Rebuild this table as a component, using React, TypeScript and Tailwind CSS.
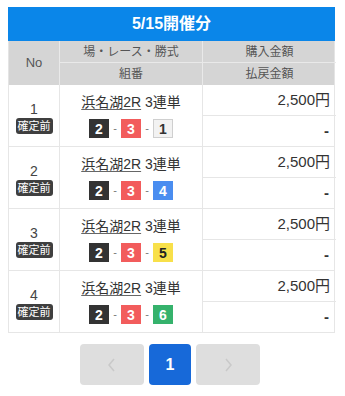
const font = { fontFamily: '"Liberation Sans", "Noto Sans CJK JP", sans-serif' };

type Row = { no: number; third: { n: string; cls: string } };

const rows: Row[] = [
  { no: 1, third: { n: "1", cls: "bg-[#f2f2f2] text-[#333] border border-[#cfcfcf]" } },
  { no: 2, third: { n: "4", cls: "bg-[#4a8df0] text-white" } },
  { no: 3, third: { n: "5", cls: "bg-[#f8e04a] text-[#222]" } },
  { no: 4, third: { n: "6", cls: "bg-[#35b26c] text-white" } },
];

function Box({ n, cls }: { n: string; cls: string }) {
  return (
    <span className={`flex h-[19px] w-[20px] items-center justify-center text-[14px] font-bold leading-none ${cls}`}>
      {n}
    </span>
  );
}

function Dash() {
  return <span className="w-[12px] text-center text-[11px] leading-none text-[#777]">-</span>;
}

export default function App() {
  return (
    <div className="min-h-[396px] w-[345px] bg-white pt-[7px]" style={font}>
      <div className="mx-[8px] w-[327px]">
        <div className="flex h-[34px] items-center justify-center bg-[#0a86e9] text-[16px] font-bold text-white">
          5/15開催分
        </div>
        <div className="grid grid-cols-[51px_143px_133px] border-x border-[#e4e4e4] bg-[#d5d5d5] text-[12px] text-[#555]">
          <div className="row-span-2 flex items-center justify-center border-r border-[#e9e9e9] text-[13px]">No</div>
          <div className="flex h-[22px] items-center justify-center border-r border-b border-[#e9e9e9]">場・レース・勝式</div>
          <div className="flex h-[22px] items-center justify-center border-b border-[#e9e9e9]">購入金額</div>
          <div className="flex h-[22px] items-center justify-center border-r border-[#e9e9e9]">組番</div>
          <div className="flex h-[22px] items-center justify-center">払戻金額</div>
        </div>
        {rows.map((r) => (
          <div key={r.no} className="grid h-[62px] grid-cols-[51px_143px_133px] border-x border-b border-[#e6e6e6]">
            <div className="flex flex-col items-center justify-center gap-[2px] border-r border-[#e6e6e6] pt-[4px]">
              <span className="text-[14px] leading-none text-[#444]">{r.no}</span>
              <span className="rounded-[3px] bg-[#3f3f3f] px-[2px] py-[1px] text-[11px] leading-[14px] text-white">確定前</span>
            </div>
            <div className="flex flex-col items-center justify-center gap-[10px] border-r border-[#e6e6e6] pt-[2px]">
              <span className="text-[14px] leading-none text-[#333]">
                <span className="underline decoration-[#666] underline-offset-[2px]">浜名湖2R</span> 3連単
              </span>
              <div className="flex items-center">
                <Box n="2" cls="bg-[#333] text-white" />
                <Dash />
                <Box n="3" cls="bg-[#f25c5c] text-white" />
                <Dash />
                <Box {...r.third} />
              </div>
            </div>
            <div className="grid grid-rows-2">
              <div className="flex items-center justify-end border-b border-[#e6e6e6] pr-[6px] text-[15px] text-[#333]">2,500円</div>
              <div className="flex items-center justify-end pr-[7px] text-[15px] font-bold text-[#333]">-</div>
            </div>
          </div>
        ))}
        <div className="mt-[11px] flex justify-center gap-[5px] pr-[3px]">
          <div className="flex h-[41px] w-[64px] items-center justify-center rounded-[4px] bg-[#dedede]">
            <svg width="10" height="14" viewBox="0 0 10 14" fill="none" stroke="#c9c9c9" strokeWidth="1.5"><path d="M7 1 2 7l5 6" /></svg>
          </div>
          <div className="flex h-[41px] w-[42px] items-center justify-center rounded-[4px] bg-[#1769d9] text-[16px] font-bold text-white">1</div>
          <div className="flex h-[41px] w-[64px] items-center justify-center rounded-[4px] bg-[#dedede]">
            <svg width="10" height="14" viewBox="0 0 10 14" fill="none" stroke="#c9c9c9" strokeWidth="1.5"><path d="m3 1 5 6-5 6" /></svg>
          </div>
        </div>
      </div>
    </div>
  );
}
